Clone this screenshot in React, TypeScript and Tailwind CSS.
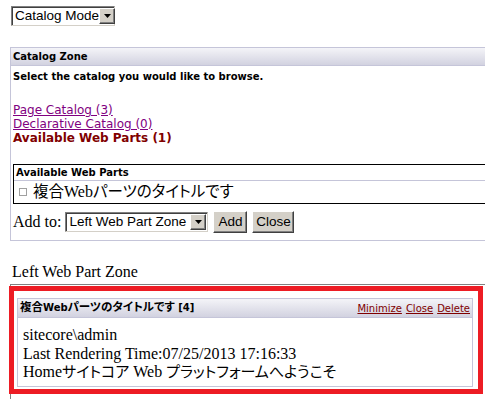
import React from "react";

function DropButton() {
  return (
    <div className="flex h-[16px] w-[16px] shrink-0 items-center justify-center bg-[#d4d0c8] border border-t-white border-l-white border-b-[#404040] border-r-[#404040] shadow-[inset_-1px_-1px_0_#808080]">
      <svg width="7" height="4" viewBox="0 0 7 4">
        <path d="M0 0 H7 L3.5 4 Z" fill="#000" />
      </svg>
    </div>
  );
}

function Select({ label, width }: { label: string; width: string }) {
  return (
    <div
      className={`flex h-[20px] shrink-0 items-center justify-between bg-white border border-t-[#808080] border-l-[#808080] border-b-[#d4d0c8] border-r-[#d4d0c8] shadow-[inset_1px_1px_0_#404040] pl-[3px] pr-[1px] ${width}`}
    >
      <span className="whitespace-nowrap font-['Liberation_Sans',sans-serif] text-[13.5px] leading-none text-black">{label}</span>
      <DropButton />
    </div>
  );
}

function Button({ label, width }: { label: string; width: string }) {
  return (
    <div
      className={`flex h-[22px] shrink-0 items-center justify-center bg-[#d4d0c8] border border-t-white border-l-white border-b-[#404040] border-r-[#404040] shadow-[inset_-1px_-1px_0_#808080] font-['Liberation_Sans',sans-serif] text-[13.5px] leading-none text-black ${width}`}
    >
      {label}
    </div>
  );
}

export default function App() {
  return (
    <div className="relative h-[399px] w-[485px] overflow-hidden bg-white font-['Liberation_Serif','Noto_Sans_CJK_JP',serif] text-black">
      <div className="pl-[11px] pt-[6px]">
        <Select label="Catalog Mode" width="w-[104px]" />
      </div>

      {/* Catalog Zone */}
      <div className="ml-[10px] mt-[21px] w-[520px] border border-[#c5c5d9]">
        <div className="flex h-[18px] items-center border-b border-[#c5c5d9] bg-gradient-to-b from-[#f4f4f8] to-[#d2d2e0] pl-[2px] font-['DejaVu_Sans',sans-serif] text-[10px] font-bold">
          Catalog Zone
        </div>
        <div className="pl-[2px] pt-[4px] font-['DejaVu_Sans',sans-serif] text-[10px] font-bold leading-[13px]">
          Select the catalog you would like to browse.
        </div>
        <div className="pl-[2px] pt-[20px] font-['DejaVu_Sans',sans-serif] text-[12px] leading-[14px]">
          <div className="text-[#800080] underline">Page Catalog (3)</div>
          <div className="text-[#800080] underline">Declarative Catalog (0)</div>
          <div className="font-bold text-[#800000]">Available Web Parts (1)</div>
        </div>

        <div className="ml-[2px] mt-[19px] border border-black">
          <div className="flex h-[16px] items-center border-b border-[#c5c5d9] pl-[2px] font-['DejaVu_Sans',sans-serif] text-[10px] font-bold">
            Available Web Parts
          </div>
          <div className="flex h-[22px] items-center pl-[5px]">
            <span className="mr-[6px] inline-block h-[8px] w-[8px] border border-[#a0a0a0]" />
            <span className="text-[16px] leading-none [font-feature-settings:'palt']">
              <span className="text-[15.5px]">複合</span>Web<span className="text-[15.5px]">パーツのタイトルです</span>
            </span>
          </div>
        </div>

        <div className="flex items-center pl-[2px] pt-[7px] pb-[7px]">
          <span className="mr-[4px] whitespace-nowrap text-[16px] leading-none">Add to:</span>
          <Select label="Left Web Part Zone" width="w-[143px]" />
          <Button label="Add" width="ml-[5px] w-[34px]" />
          <Button label="Close" width="ml-[5px] w-[42px]" />
        </div>
      </div>

      <div className="pl-[12px] pt-[22px] text-[16px] leading-[18px]">Left Web Part Zone</div>

      {/* Web part zone */}
      <div className="relative ml-[10px] mt-[3px] h-[140px] w-[520px] border border-[#808080] pl-[6px] pt-[13px]">
        <div className="w-[456px] border border-[#c5c5d9]">
          <div className="flex h-[19px] items-center justify-between border-b border-[#c5c5d9] bg-gradient-to-b from-[#f4f4f8] to-[#d2d2e0] px-[2px]">
            <span className="font-['DejaVu_Sans','Noto_Sans_CJK_JP',sans-serif] text-[10px] font-bold [font-feature-settings:'palt']">
              <span className="text-[11.5px]">複合</span>Web<span className="text-[11.5px]">パーツのタイトルです</span> [4]
            </span>
            <span className="flex gap-[4px] font-['DejaVu_Sans',sans-serif] text-[10px] text-[#800000]">
              <span className="underline">Minimize</span>
              <span className="underline">Close</span>
              <span className="underline">Delete</span>
            </span>
          </div>
          <div className="px-[5px] pt-[8px] pb-[4px] text-[16px] leading-[18.5px] [font-feature-settings:'palt']">
            <div>sitecore\admin</div>
            <div>Last Rendering Time:07/25/2013 17:16:33</div>
            <div>
              Home<span className="text-[15px]">サイトコア</span> Web <span className="text-[15px]">プラットフォームへようこそ</span>
            </div>
          </div>
        </div>
        {/* red annotation rectangle */}
        <div className="absolute left-[-2px] top-[1px] h-[108px] w-[474px] border-[5px] border-[#ed1c24]" />
      </div>
    </div>
  );
}
